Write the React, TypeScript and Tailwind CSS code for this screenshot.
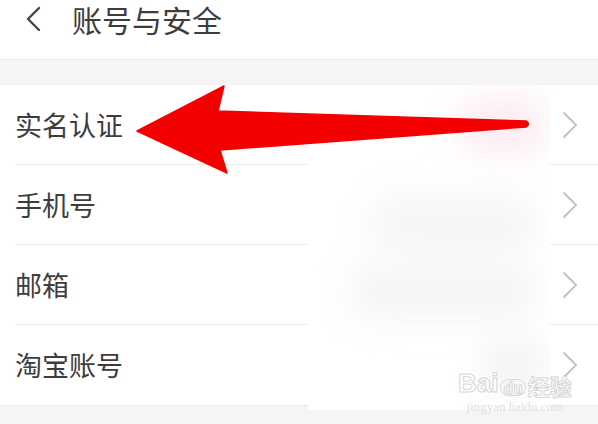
import React from 'react';

const rows = ['实名认证', '手机号', '邮箱', '淘宝账号'];

const Chevron = () => (
  <svg width="16" height="28" viewBox="0 0 16 28" fill="none">
    <path d="M2 2 L14 14 L2 26" stroke="#c4c4c4" strokeWidth="2" strokeLinecap="round" strokeLinejoin="round" />
  </svg>
);

const App = () => {
  return (
    <div
      className="relative w-[598px] h-[424px] overflow-hidden bg-white text-[#3d3d3d]"
      style={{ fontFamily: '"Noto Sans CJK SC", "Noto Sans", sans-serif' }}
    >
      {/* header */}
      <div className="h-[59px] bg-white">
        <div className="flex items-center h-[38px] pl-[24px]">
          <svg width="18" height="26" viewBox="0 0 18 26" fill="none">
            <path d="M15 2 L4 13 L15 24" stroke="#444" strokeWidth="2.4" strokeLinecap="round" strokeLinejoin="round" />
          </svg>
          <span className="ml-[30px] text-[30px] leading-[38px]">账号与安全</span>
        </div>
      </div>
      <div className="h-[26px] bg-[#f5f5f5] border-t border-[#e8e8e8]" />

      {/* list */}
      <div className="bg-white">
        {rows.map((label, i) => (
          <div key={label} className="pl-[15px]">
            <div
              className={
                'flex items-center justify-between h-[80px] pr-[20px] ' +
                (i < rows.length - 1 ? 'border-b border-[#ececec]' : '')
              }
            >
              <span className="text-[27px] leading-[34px]">{label}</span>
              <Chevron />
            </div>
          </div>
        ))}
      </div>
      <div className="h-[20px] bg-[#f5f5f5] border-t border-[#ebebeb]" />

      {/* redacted area */}
      <div className="absolute left-[308px] top-[85px] w-[242px] h-[325px] bg-white overflow-hidden">
        <div className="absolute left-[150px] top-[10px] w-[90px] h-[60px] rounded-full bg-[#fcedf2] blur-[16px]" />
        <div className="absolute left-[60px] top-[110px] w-[170px] h-[60px] rounded-full bg-[#f6f6f7] blur-[16px]" />
        <div className="absolute left-[40px] top-[180px] w-[190px] h-[55px] rounded-full bg-[#f5f5f5] blur-[16px]" />
        <div className="absolute left-[170px] top-[250px] w-[70px] h-[60px] rounded-full bg-[#f5f5f5] blur-[14px]" />
      </div>

      {/* watermark */}
      <div className="absolute left-[458px] top-[370px] flex flex-col items-center text-white">
        <div className="flex items-end text-[26px] leading-none font-bold" style={{ WebkitTextStroke: '1px #d6d6d6' }}>
          <span style={{ fontFamily: '"Liberation Sans", sans-serif' }}>Bai</span>
          <span className="mx-[2px] text-[15px] rounded-full border border-[#d6d6d6] px-[2px]">du</span>
          <span className="text-[22px]">经验</span>
        </div>
        <span className="text-[13px] leading-none mt-[4px] text-[#e0e0e0]" style={{ fontFamily: '"Liberation Serif", serif' }}>
          jingyan.baidu.com
        </span>
      </div>

      {/* red arrow */}
      <svg className="absolute left-0 top-0" width="598" height="424" viewBox="0 0 598 424">
        <path
          d="M137 131 L224 86 L218 111 L526 121 Q531 124 526 127 L220 150 L227 173 Z"
          fill="#f50000"
          stroke="#f50000"
          strokeWidth="1.5"
          strokeLinejoin="round"
        />
      </svg>
    </div>
  );
};

export default App;
